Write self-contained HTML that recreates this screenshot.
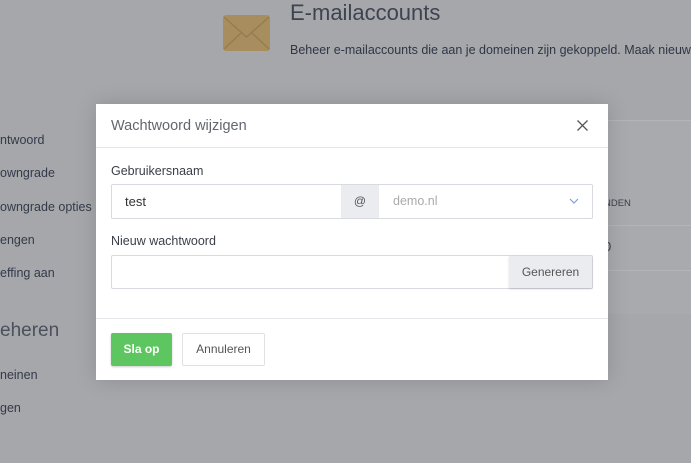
<!DOCTYPE html>
<html><head><meta charset="utf-8"><style>
*{box-sizing:border-box;margin:0;padding:0}
body{width:691px;height:463px;overflow:hidden;background:#a6a7ab;font-family:"Liberation Sans",sans-serif;position:relative;color:#3a3f48}
.abs{position:absolute}
.side{left:0;font-size:12.5px;color:#333a48;white-space:nowrap}
.card{left:96px;top:120px;width:600px;height:194px;background:#a9aaae;border-top:1px solid #b4b5b9}
.modal{left:96px;top:104px;width:512px;height:276px;background:#fff;box-shadow:0 0 20px rgba(0,0,0,.15)}
.hdr{height:44px;border-bottom:1px solid #e6e7ea;padding:14px 15px;font-size:14.5px;color:#62666e}
.lbl{font-size:12.5px;color:#3a3f48}
.inp{border:1px solid #d8dae0;border-radius:2px;height:35px}
</style></head><body>
<svg class="abs" style="left:223px;top:15px" width="47" height="36" viewBox="0 0 47 36"><rect width="47" height="36" rx="3" fill="#a88e5f"/><path d="M1 2 L23.5 22 L46 2 M1 34 L18 18 M46 34 L29 18" stroke="#967d50" stroke-width="1.5" fill="none"/></svg>
<div class="abs" style="left:290px;top:0px;font-size:22px;color:#3d4350">E-mailaccounts</div>
<div class="abs" style="left:290px;top:43px;font-size:12.5px;color:#2f3644;white-space:nowrap">Beheer e-mailaccounts die aan je domeinen zijn gekoppeld. Maak nieuw</div>
<div class="abs card"></div>
<div class="abs" style="left:596px;top:225px;width:95px;border-top:1px solid #b4b5b9"></div>
<div class="abs" style="left:596px;top:270px;width:95px;border-top:1px solid #b4b5b9"></div>
<div class="abs" style="left:604px;top:198px;font-size:9.5px;color:#3a3f48">NDEN</div>
<div class="abs" style="left:604px;top:239px;font-size:13px;color:#3a3f48">0</div>
<div class="abs side" style="top:133px">ntwoord</div>
<div class="abs side" style="top:166px">owngrade</div>
<div class="abs side" style="top:200px">owngrade opties</div>
<div class="abs side" style="top:233px">engen</div>
<div class="abs side" style="top:266px">effing aan</div>
<div class="abs" style="left:0;top:320px;font-size:19px;color:#4a505c">eheren</div>
<div class="abs side" style="top:368px">neinen</div>
<div class="abs side" style="top:401px">gen</div>
<div class="abs modal">
 <div class="hdr">Wachtwoord wijzigen<svg style="position:absolute;right:20px;top:16px" width="11" height="11"><path d="M0.5 0.5 L10.5 10.5 M10.5 0.5 L0.5 10.5" stroke="#555" stroke-width="1.3"/></svg></div>
 <div class="abs lbl" style="left:15px;top:60px">Gebruikersnaam</div>
 <div class="abs inp" style="left:15px;top:80px;width:482px">
  <div class="abs" style="left:13px;top:9px;font-size:13px;color:#333">test</div>
  <div class="abs" style="left:229px;top:0;width:38px;height:33px;background:#ebecef;text-align:center;line-height:33px;font-size:12px;color:#555">@</div>
  <div class="abs" style="left:281px;top:9px;font-size:12.5px;color:#aaa">demo.nl</div>
  <svg class="abs" style="left:457px;top:13px" width="10" height="7"><path d="M1 1 L5 5 L9 1" stroke="#7ea3d0" stroke-width="1.2" fill="none"/></svg>
 </div>
 <div class="abs lbl" style="left:15px;top:130px">Nieuw wachtwoord</div>
 <div class="abs inp" style="left:15px;top:151px;width:482px;height:34px">
  <div class="abs" style="right:0;top:0;width:83px;height:32px;background:#ebecef;box-shadow:0 1px 2px rgba(0,0,0,.15);text-align:center;line-height:32px;font-size:12px;color:#555">Genereren</div>
 </div>
 <div class="abs" style="left:0;top:214px;width:512px;border-top:1px solid #e6e7ea"></div>
 <div class="abs" style="left:15px;top:229px;width:61px;height:33px;background:#5ec660;border-radius:2px;color:#fff;font-size:12px;font-weight:bold;text-align:center;line-height:33px;box-shadow:0 1px 2px rgba(0,0,0,.2)">Sla op</div>
 <div class="abs" style="left:86px;top:229px;width:83px;height:33px;border:1px solid #e0e1e4;border-radius:2px;color:#555;font-size:12px;text-align:center;line-height:31px">Annuleren</div>
</div>
</body></html>
